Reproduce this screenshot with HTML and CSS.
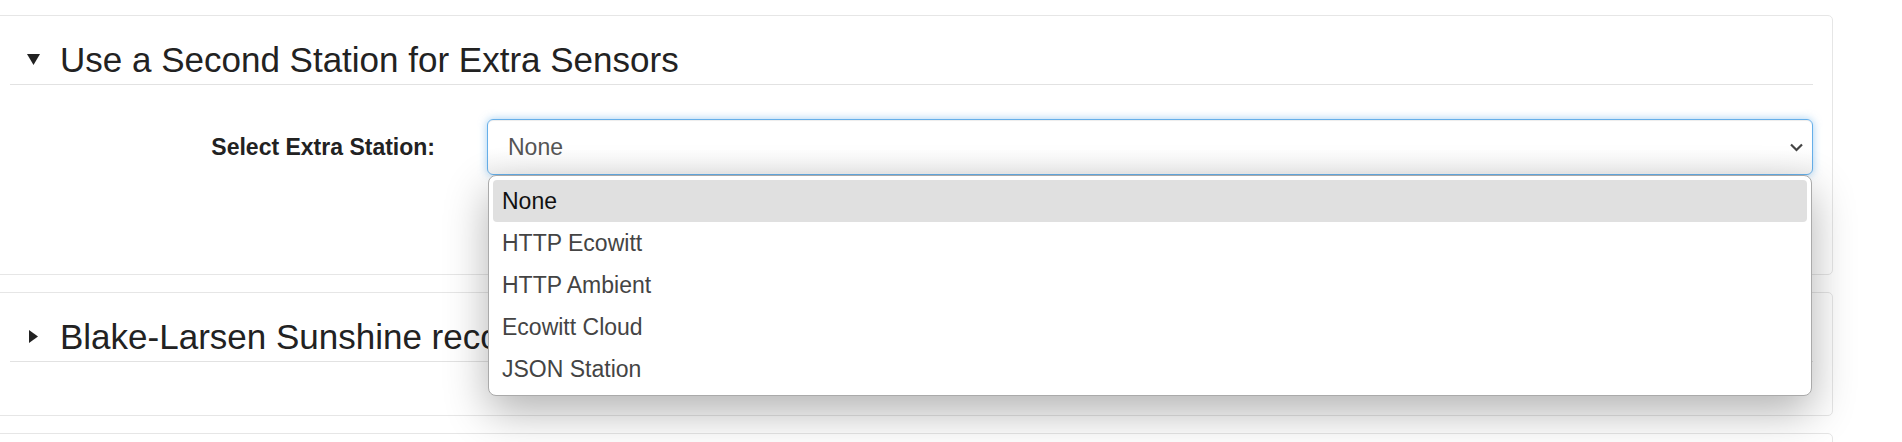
FILE: index.html
```html
<!DOCTYPE html>
<html lang="en">
<head>
    <meta charset="UTF-8">
    <title>Extra Sensors</title>
    <link rel="stylesheet" href="styles.css">
</head>
<body>
    <div class="panel">
        <div class="panel-head">
            <svg class="caret" width="13" height="11" viewBox="0 0 13 11"><polygon points="0,0 13,0 6.5,11" fill="#222"/></svg>
            <span>Use a Second Station for Extra Sensors</span>
        </div>
        <div class="form-row">
            <label class="form-label" for="extraStation">Select Extra Station:</label>
            <div class="select-wrap">
                <div class="select" id="extraStation">
                    <span>None</span>
                    <svg class="chevron" width="13" height="9" viewBox="0 0 13 9"><polyline points="1,1.5 6.5,7 12,1.5" fill="none" stroke="#444" stroke-width="2.2"/></svg>
                </div>
                <ul class="dropdown">
                    <li class="selected">None</li>
                    <li>HTTP Ecowitt</li>
                    <li>HTTP Ambient</li>
                    <li>Ecowitt Cloud</li>
                    <li>JSON Station</li>
                </ul>
            </div>
        </div>
    </div>

    <div class="panel">
        <div class="panel-head">
            <svg class="caret" width="13" height="13" viewBox="0 0 13 13"><polygon points="2,0 11,6.5 2,13" fill="#222"/></svg>
            <span>Blake-Larsen Sunshine recorder</span>
        </div>
    </div>

    <div class="panel panel-empty"></div>
</body>
</html>
```

FILE: styles.css
```css
html, body {
    margin: 0;
    height: 100%;
    overflow: hidden;
    background: #fff;
    font-family: "Liberation Sans", Arial, sans-serif;
    color: #222;
}
body {
    padding-top: 15px;
    box-sizing: border-box;
}
.panel {
    width: 1803px;
    margin: 0 0 17px -11px;
    padding: 24px 19px 53px 20px;
    border: 1px solid #e6e6e6;
    border-radius: 5px;
    background: #fff;
}
.panel-empty {
    height: 60px;
}
.panel-head {
    display: flex;
    align-items: center;
    gap: 20px;
    padding: 0 0 5px 17px;
    border-bottom: 1px solid #e2e2e2;
    font-size: 35px;
    line-height: 39px;
}
.caret {
    flex: none;
}
.form-row {
    display: grid;
    grid-template-columns: 425px 1fr;
    column-gap: 52px;
    align-items: center;
    margin: 34px 0 46px;
}
.form-label {
    text-align: right;
    font-size: 23px;
    font-weight: bold;
}
.select-wrap {
    position: relative;
}
.select {
    display: flex;
    align-items: center;
    justify-content: space-between;
    height: 54px;
    padding: 0 9px 0 20px;
    border: 1px solid #66afe9;
    border-radius: 6px;
    background: linear-gradient(#fff 55%, #f3f3f3);
    box-shadow: inset 0 1px 1px rgba(0,0,0,.075), 0 0 8px rgba(102,175,233,.6);
    font-size: 23px;
    color: #555;
}
.dropdown {
    position: absolute;
    top: 56px;
    left: 1px;
    right: 1px;
    margin: 0;
    padding: 4px 4px 5px;
    list-style: none;
    background: #fff;
    border: 1px solid #aaa;
    border-radius: 8px;
    box-shadow: 0 16px 44px rgba(0,0,0,.3);
    z-index: 2;
}
.dropdown li {
    height: 42px;
    line-height: 43px;
    padding-left: 9px;
    border-radius: 4px;
    font-size: 23px;
    color: #444;
}
.dropdown li.selected {
    background: #e0e0e0;
    color: #111;
}
```
